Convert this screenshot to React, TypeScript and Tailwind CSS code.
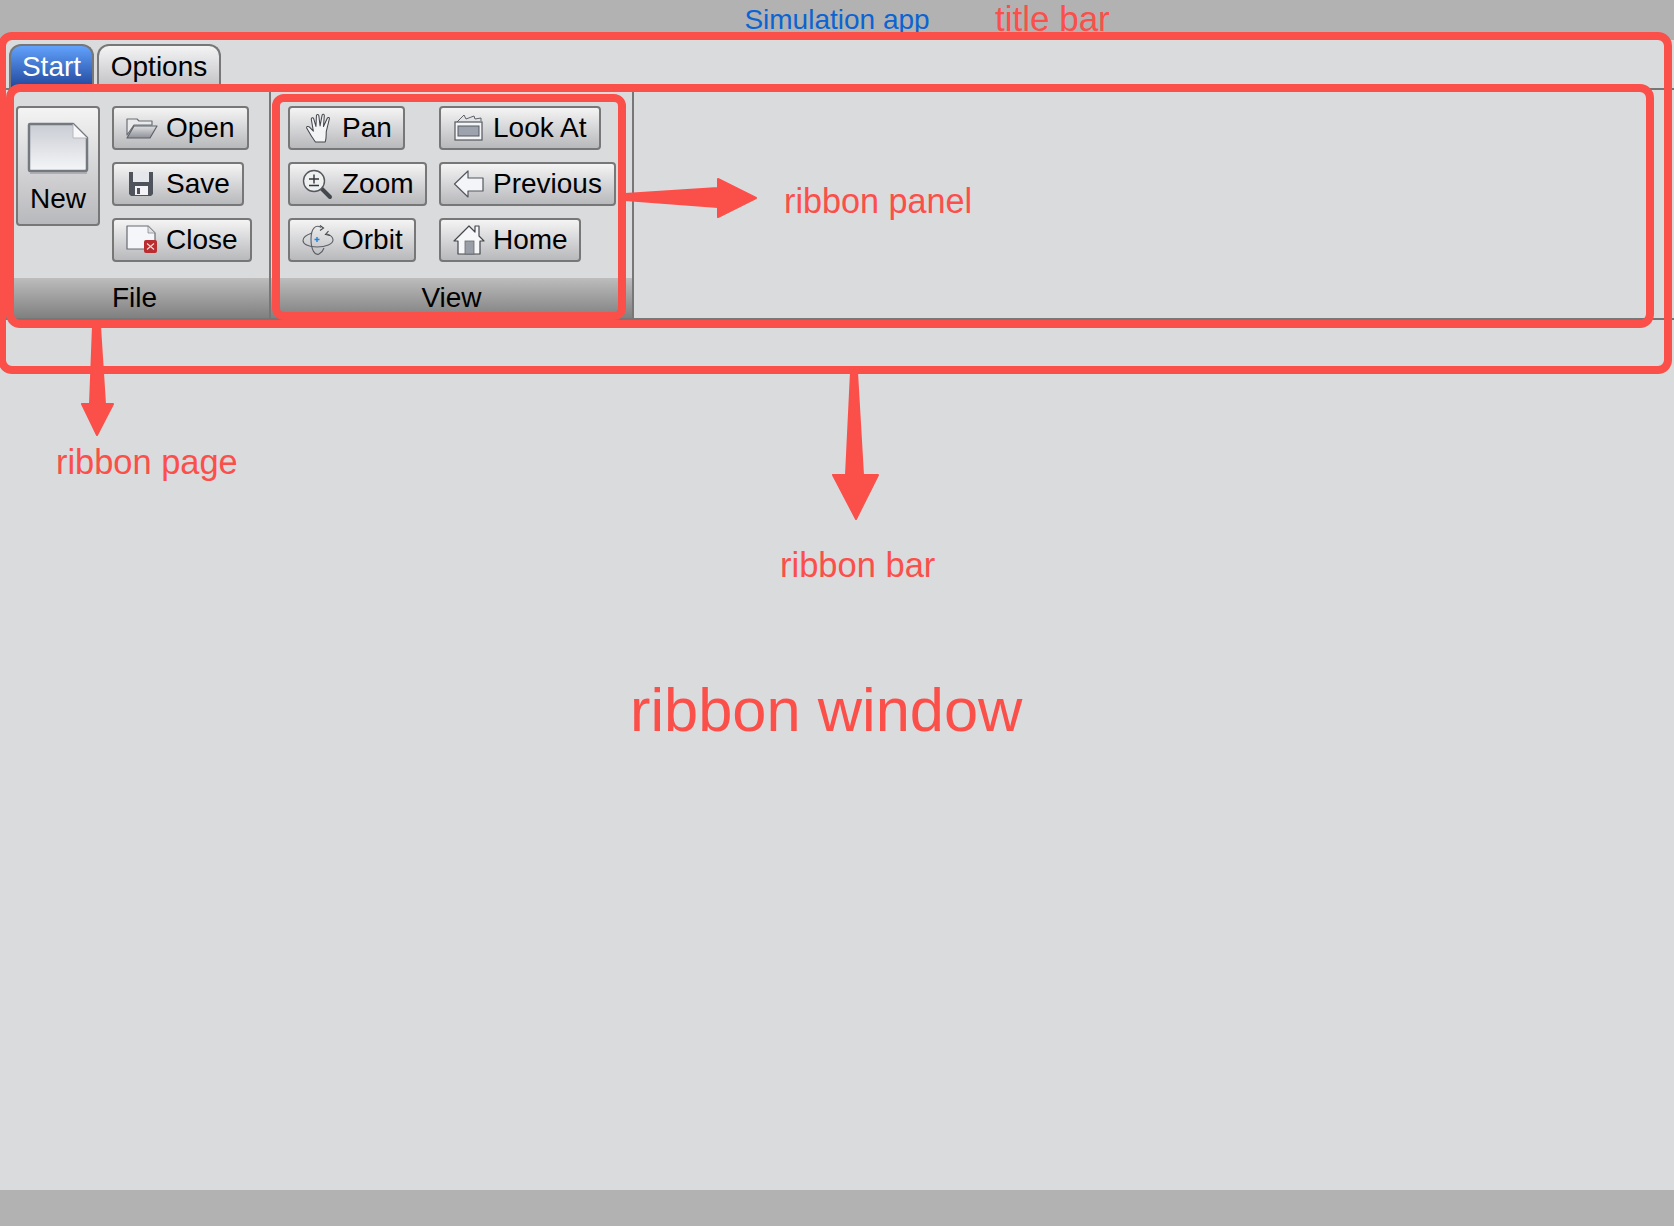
import type { ReactNode } from 'react';

const FileNewIcon = () => (
  <svg width="62" height="52" viewBox="0 0 62 52">
    <defs>
      <linearGradient id="newFill" x1="0" y1="0" x2="0" y2="1">
        <stop offset="0" stopColor="#c9ccd3" />
        <stop offset="1" stopColor="#f5f6f8" />
      </linearGradient>
    </defs>
    <path d="M3 2H46L60 16V47Q60 49 58 49H3Q2 49 2 47V3Q2 2 3 2Z" fill="url(#newFill)" stroke="#74787f" strokeWidth="2.5" strokeLinejoin="round" />
    <path d="M46 2V16H60Z" fill="#f8f8fa" stroke="#b5b8bd" strokeWidth="1" />
    <path d="M3 51H60" stroke="#a0a3a8" strokeWidth="1.5" />
  </svg>
);

const FolderIcon = () => (
  <svg width="32" height="32" viewBox="0 0 32 32">
    <defs>
      <linearGradient id="flap" x1="0" y1="0" x2="0" y2="1">
        <stop offset="0" stopColor="#dfe0e3" />
        <stop offset="1" stopColor="#8d9097" />
      </linearGradient>
    </defs>
    <path d="M1 23V7H11L13 9H26V13H8Z" fill="#e9eaec" stroke="#6b6f75" strokeWidth="1.2" strokeLinejoin="round" />
    <path d="M1 26L8 14H31L24 26Z" fill="url(#flap)" stroke="#5d6168" strokeWidth="1.2" strokeLinejoin="round" />
  </svg>
);

const SaveIcon = () => (
  <svg width="32" height="32" viewBox="0 0 32 32">
    <path d="M3 4H27V26L25 28H5L3 26Z" fill="#4f545c" />
    <rect x="7" y="4" width="16" height="10" fill="#e6e7ea" />
    <rect x="9" y="18" width="13" height="9" fill="#f4f4f6" />
    <rect x="11" y="20" width="3" height="6" fill="#4f545c" />
  </svg>
);

const CloseDocIcon = () => (
  <svg width="32" height="32" viewBox="0 0 32 32">
    <path d="M1 2H22L29 9V25H1Z" fill="#f5f6f9" stroke="#666a70" strokeWidth="1.2" strokeLinejoin="round" />
    <path d="M22 2V9H29Z" fill="#dfe1e5" stroke="#888b91" strokeWidth="0.8" />
    <rect x="18" y="16" width="13" height="13" rx="2" fill="#b92c2f" />
    <path d="M21 19.5L28 25.5M28 19.5L21 25.5" stroke="#f4d6d6" strokeWidth="1.2" />
  </svg>
);

const HandIcon = () => (
  <svg width="32" height="32" viewBox="0 0 25 31">
    <path
      d="M10 29C7 25 4 20 1.5 15.5C1 14 3 13.5 4 14.5L8 18.5L6 7C5.8 5.5 7.8 5 8.3 6.5L10.5 14L11 3.5C11 2 13.2 2 13.3 3.5L14.5 13.5L16.5 3C16.8 1.6 18.8 2 18.6 3.5L17.8 14L21.5 6C22.1 4.7 24 5.3 23.5 6.7L20.5 19C20.5 23 20.5 26 19.5 29Z"
      fill="#f3f4f6"
      stroke="#43464b"
      strokeWidth="1"
      strokeLinejoin="round"
    />
  </svg>
);

const ZoomIcon = () => (
  <svg width="32" height="32" viewBox="0 0 32 32">
    <path d="M19 20L28 29" stroke="#44474c" strokeWidth="4" strokeLinecap="round" />
    <circle cx="12" cy="13" r="10.5" fill="#eef1ef" stroke="#55585d" strokeWidth="1.4" />
    <path d="M7 11H17M12 6.5V15.5M7 17.5H17" stroke="#33363a" strokeWidth="1.4" />
  </svg>
);

const OrbitIcon = () => (
  <svg width="32" height="32" viewBox="0 0 32 32" fill="none">
    <path d="M10 9C4 11 1 14 1 16.5C1 20 6 23 15 23C24 23 31 20 31 16C31 13 28 11 25 10" stroke="#5b5f65" strokeWidth="1.1" />
    <path d="M19 3.5C14 0 9 4 9 15C9 26 13 32 17 30C19 29 21 27 22 24" stroke="#5b5f65" strokeWidth="1.1" />
    <path d="M12.5 15.5H17.5M15 13V18" stroke="#1c83e6" strokeWidth="1.4" />
    <path d="M18 1.5L21.5 4L18 6.5M26.5 7L23.5 10.5L28 11.5" stroke="#44474c" strokeWidth="1.1" />
  </svg>
);

const LookAtIcon = () => (
  <svg width="32" height="32" viewBox="0 0 32 32">
    <path d="M3 11L11 3L13 7L21 4L22 7L28 6V9" fill="#e2e3e6" stroke="#5e6167" strokeWidth="1" strokeLinejoin="round" />
    <rect x="2" y="10" width="27" height="18" fill="#f4f5f7" stroke="#55585e" strokeWidth="1.2" />
    <rect x="5" y="14" width="21" height="10" fill="#9ca3af" stroke="#565a61" strokeWidth="1" />
  </svg>
);

const BackIcon = () => (
  <svg width="32" height="32" viewBox="0 0 32 32">
    <path d="M1.5 16L15 3V10H30V23H15V29Z" fill="#f3f5f8" stroke="#55585e" strokeWidth="1.2" strokeLinejoin="round" />
  </svg>
);

const HomeIcon = () => (
  <svg width="32" height="32" viewBox="0 0 32 32">
    <path d="M1 17L16 2L22 8V2H26V12L31 17H27V30H5V17Z" fill="#f6f7f9" stroke="#44474c" strokeWidth="1.2" strokeLinejoin="round" />
    <rect x="12" y="17" width="9" height="13" fill="#9a9ea6" stroke="#666a70" strokeWidth="0.8" />
  </svg>
);

const btnSkin = 'border-2 border-[#777777] rounded-[4px] bg-gradient-to-b from-[#f4f4f5] to-[#b8b9bc] text-black';

function ToolButton({ icon, label, width }: { icon: ReactNode; label: string; width: string }) {
  return (
    <button className={`${btnSkin} ${width} h-[44px] flex items-center pl-[12px] gap-[8px] text-[28px] leading-none`}>
      <span className="w-[32px] h-[32px] shrink-0">{icon}</span>
      <span>{label}</span>
    </button>
  );
}

function PanelFooter({ label }: { label: string }) {
  return (
    <div className="h-[40px] shrink-0 flex items-center justify-center pb-[1px] bg-gradient-to-b from-[#bdbdbd] to-[#808080] text-[28px] text-black">
      {label}
    </div>
  );
}

// red notes drawn over the screenshot
function Arrows() {
  return (
    <svg className="absolute left-0 top-0 pointer-events-none" width="1674" height="1226" viewBox="0 0 1674 1226">
      <g fill="#fb4f4a" stroke="#fb4f4a" strokeWidth="2" strokeLinejoin="round">
        <path d="M93 326H100L105 404H113L97 435L82 404H90Z" />
        <path d="M851 372H857L863 475H878L856 519L833 475H846Z" />
        <path d="M625 194L718 188V179L756 198L718 217V207L625 200Z" />
      </g>
    </svg>
  );
}

export default function App() {
  return (
    <div className="relative h-screen w-full overflow-hidden flex flex-col bg-[#dadbdd] font-['Liberation_Sans',Arial,sans-serif]">
      {/* Title bar */}
      <div className="h-[40px] shrink-0 bg-[#b2b2b2] flex items-center justify-center text-[28px] text-[#0a64d2]">
        Simulation app
      </div>

      {/* Ribbon bar */}
      <div className="shrink-0">
        <div className="h-[48px] flex items-end gap-[3px] pl-[9px]">
          <div className="w-[85px] h-[44px] rounded-t-[12px] border-2 border-b-0 border-[#777777] bg-gradient-to-b from-[#62a2fd] to-[#22479b] text-white text-[28px] flex items-center justify-center">
            Start
          </div>
          <div className="w-[124px] h-[44px] rounded-t-[12px] border-2 border-b-0 border-[#777777] bg-gradient-to-b from-[#f4f4f5] to-[#c0c1c4] text-black text-[28px] flex items-center justify-center">
            Options
          </div>
        </div>

        <div className="h-[232px] flex border-y-2 border-[#777777]">
          {/* File panel */}
          <div className="w-[271px] shrink-0 flex flex-col border-r-2 border-[#777777]">
            <div className="flex-1 flex gap-[12px] pl-[16px] pt-[16px]">
              <button className={`${btnSkin} w-[84px] h-[120px] flex flex-col items-center pt-[14px] text-[28px] leading-none`}>
                <FileNewIcon />
                <span className="mt-[11px]">New</span>
              </button>
              <div className="flex flex-col gap-[12px]">
                <ToolButton icon={<FolderIcon />} label="Open" width="w-[137px]" />
                <ToolButton icon={<SaveIcon />} label="Save" width="w-[132px]" />
                <ToolButton icon={<CloseDocIcon />} label="Close" width="w-[140px]" />
              </div>
            </div>
            <PanelFooter label="File" />
          </div>

          {/* View panel */}
          <div className="w-[363px] shrink-0 flex flex-col border-r-2 border-[#777777]">
            <div className="flex-1 flex gap-[11px] pl-[17px] pt-[16px]">
              <div className="w-[140px] flex flex-col gap-[12px]">
                <ToolButton icon={<HandIcon />} label="Pan" width="w-[117px]" />
                <ToolButton icon={<ZoomIcon />} label="Zoom" width="w-[139px]" />
                <ToolButton icon={<OrbitIcon />} label="Orbit" width="w-[128px]" />
              </div>
              <div className="flex flex-col gap-[12px]">
                <ToolButton icon={<LookAtIcon />} label="Look At" width="w-[162px]" />
                <ToolButton icon={<BackIcon />} label="Previous" width="w-[177px]" />
                <ToolButton icon={<HomeIcon />} label="Home" width="w-[142px]" />
              </div>
            </div>
            <PanelFooter label="View" />
          </div>
        </div>
      </div>

      <div className="flex-1" />

      {/* Status strip */}
      <div className="h-[36px] shrink-0 bg-[#b2b2b2]" />

      {/* Annotations */}
      <div className="absolute left-[-2px] top-[32px] w-[1674px] h-[342px] border-[8px] border-[#fb4f4a] rounded-[14px]" />
      <div className="absolute left-[6px] top-[84px] w-[1648px] h-[244px] border-[8px] border-[#fb4f4a] rounded-[14px]" />
      <div className="absolute left-[272px] top-[94px] w-[354px] h-[226px] border-[8px] border-[#fb4f4a] rounded-[12px]" />
      <Arrows />
      <span className="absolute left-[995px] top-[-1px] text-[35px] leading-[40px] text-[#fb4f4a]">title bar</span>
      <span className="absolute left-[784px] top-[181px] text-[34.2px] leading-[40px] text-[#fb4f4a]">ribbon panel</span>
      <span className="absolute left-[56px] top-[442px] text-[34.4px] leading-[40px] text-[#fb4f4a]">ribbon page</span>
      <span className="absolute left-[780px] top-[545px] text-[34.5px] leading-[40px] text-[#fb4f4a]">ribbon bar</span>
      <span className="absolute left-[630px] top-[675px] text-[61.4px] leading-[70px] text-[#fb4f4a]">ribbon window</span>
    </div>
  );
}
